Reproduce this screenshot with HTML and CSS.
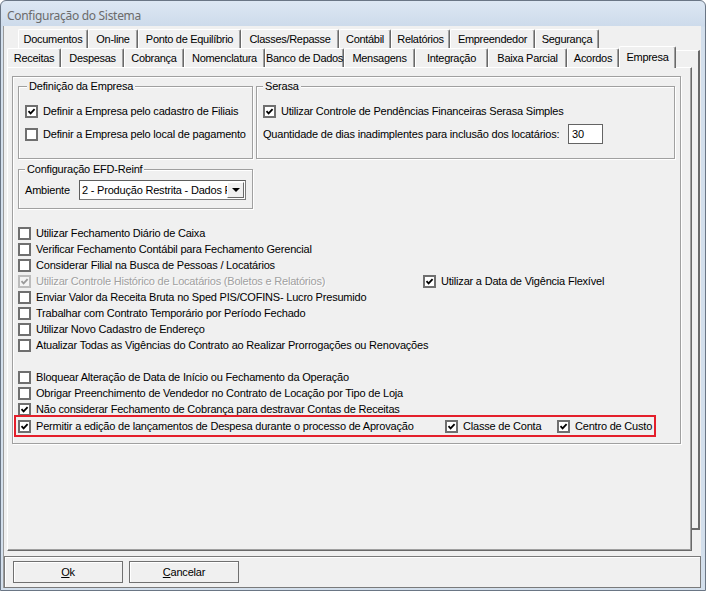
FILE: index.html
```html
<!DOCTYPE html>
<html lang="pt-BR">
<head>
<meta charset="utf-8">
<title>Configuração do Sistema</title>
<link rel="stylesheet" href="styles.css">
</head>
<body>
<div class="window">
  <div class="titlebar">Configuração do Sistema</div>
  <div class="client">
    <div class="tabs">
      <div class="tabrow row1">
        <div class="tab">Documentos</div>
        <div class="tab">On-line</div>
        <div class="tab">Ponto de Equilíbrio</div>
        <div class="tab">Classes/Repasse</div>
        <div class="tab">Contábil</div>
        <div class="tab">Relatórios</div>
        <div class="tab">Empreendedor</div>
        <div class="tab">Segurança</div>
      </div>
      <div class="tabrow row2">
        <div class="tab">Receitas</div>
        <div class="tab">Despesas</div>
        <div class="tab">Cobrança</div>
        <div class="tab">Nomenclatura</div>
        <div class="tab">Banco de Dados</div>
        <div class="tab">Mensagens</div>
        <div class="tab">Integração</div>
        <div class="tab">Baixa Parcial</div>
        <div class="tab">Acordos</div>
        <div class="tab active">Empresa</div>
        <div class="filler"></div>
      </div>
    </div>
    <div class="pagewrap">
      <div class="page">
        <div class="panel">
          <div class="toprow">
            <div class="group g-def">
              <span class="legend legend-def">Definição da Empresa</span>
              <div class="row first"><span class="cb on"><svg viewBox="0 0 9 9"><path d="M1.5 4.2 L3.6 6.4 L7.6 2.2"/></svg></span>Definir a Empresa pelo cadastro de Filiais</div>
              <div class="row second"><span class="cb"></span>Definir a Empresa pelo local de pagamento</div>
            </div>
            <div class="group g-serasa">
              <span class="legend">Serasa</span>
              <div class="row first"><span class="cb on"><svg viewBox="0 0 9 9"><path d="M1.5 4.2 L3.6 6.4 L7.6 2.2"/></svg></span>Utilizar Controle de Pendências Financeiras Serasa Simples</div>
              <div class="row qty"><span class="qty-label">Quantidade de dias inadimplentes para inclusão dos locatários:</span><span class="edit">30</span></div>
            </div>
          </div>
          <div class="group g-efd">
            <span class="legend">Configuração EFD-Reinf</span>
            <div class="row amb"><span class="amb-label">Ambiente</span>
              <span class="select"><span class="select-text">2 - Produção Restrita - Dados F</span><span class="dd"><span class="tri"></span></span></span>
            </div>
          </div>
          <div class="list list1">
            <div class="row"><span class="cb"></span>Utilizar Fechamento Diário de Caixa</div>
            <div class="row"><span class="cb"></span>Verificar Fechamento Contábil para Fechamento Gerencial</div>
            <div class="row"><span class="cb"></span>Considerar Filial na Busca de Pessoas / Locatários</div>
            <div class="row split">
              <span class="item dis"><span class="cb on dis"><svg viewBox="0 0 9 9"><path d="M1.5 4.2 L3.6 6.4 L7.6 2.2"/></svg></span>Utilizar Controle Histórico de Locatários (Boletos e Relatórios)</span>
              <span class="item"><span class="cb on"><svg viewBox="0 0 9 9"><path d="M1.5 4.2 L3.6 6.4 L7.6 2.2"/></svg></span>Utilizar a Data de Vigência Flexível</span>
            </div>
            <div class="row"><span class="cb"></span>Enviar Valor da Receita Bruta no Sped PIS/COFINS- Lucro Presumido</div>
            <div class="row"><span class="cb"></span>Trabalhar com Contrato Temporário por Período Fechado</div>
            <div class="row"><span class="cb"></span>Utilizar Novo Cadastro de Endereço</div>
            <div class="row"><span class="cb"></span>Atualizar Todas as Vigências do Contrato ao Realizar Prorrogações ou Renovações</div>
          </div>
          <div class="list list2">
            <div class="row"><span class="cb"></span>Bloquear Alteração de Data de Início ou Fechamento da Operação</div>
            <div class="row"><span class="cb"></span>Obrigar Preenchimento de Vendedor no Contrato de Locação por Tipo de Loja</div>
            <div class="row"><span class="cb on"><svg viewBox="0 0 9 9"><path d="M1.5 4.2 L3.6 6.4 L7.6 2.2"/></svg></span>Não considerar Fechamento de Cobrança para destravar Contas de Receitas</div>
            <div class="highlight">
              <span class="item"><span class="cb on"><svg viewBox="0 0 9 9"><path d="M1.5 4.2 L3.6 6.4 L7.6 2.2"/></svg></span>Permitir a edição de lançamentos de Despesa durante o processo de Aprovação</span>
              <span class="item"><span class="cb on"><svg viewBox="0 0 9 9"><path d="M1.5 4.2 L3.6 6.4 L7.6 2.2"/></svg></span>Classe de Conta</span>
              <span class="item"><span class="cb on"><svg viewBox="0 0 9 9"><path d="M1.5 4.2 L3.6 6.4 L7.6 2.2"/></svg></span>Centro de Custo</span>
            </div>
          </div>
        </div>
      </div>
      <div class="ghost"></div>
    </div>
    <div class="btnbar">
      <button class="btn"><u>O</u>k</button>
      <button class="btn"><u>C</u>ancelar</button>
    </div>
  </div>
</div>
</body>
</html>
```

FILE: styles.css
```css
* { box-sizing: border-box; }
html, body { margin: 0; padding: 0; }
body {
  width: 706px;
  height: 591px;
  overflow: hidden;
  background: #ffffff;
  font-family: "Liberation Sans", Arial, sans-serif;
  font-size: 11px;
  letter-spacing: -0.2px;
  color: #000;
}

.window {
  width: 706px;
  height: 591px;
  border: 1px solid #6a7685;
  border-radius: 6px 6px 0 0;
  background: linear-gradient(#dde7f3 0, #cddbeb 25px, #d3dfec 26px, #d3dfec 100%);
  padding: 0 4px 2px 2px;
  display: flex;
  flex-direction: column;
}

.titlebar {
  height: 25px;
  flex: none;
  padding: 3px 0 0 4px;
  display: flex;
  align-items: center;
  font-family: "Noto Sans", "Open Sans", sans-serif;
  font-size: 12px;
  letter-spacing: -0.3px;
  color: #6b6b6b;
}

.client {
  flex: 1;
  background: #f0f0f0;
  border-left: 1px solid #9a9a9a;
  display: flex;
  flex-direction: column;
}

/* ---------- tabs ---------- */
.tabs { margin-top: 3px; flex: none; }
.tabrow { display: flex; align-items: flex-start; height: 19px; }
.row1 { padding-left: 14px; }
.row2 { padding-left: 3px; }

.tab {
  height: 19px;
  display: flex;
  align-items: center;
  justify-content: center;
  white-space: nowrap;
  letter-spacing: -0.3px;
  border-top: 1px solid #ffffff;
  border-left: 1px solid #ffffff;
  border-right: 1px solid #696969;
  box-shadow: inset -1px 0 0 #a0a0a0;
  border-radius: 2px 2px 0 0;
  background: #f0f0f0;
}
.row1 .tab:nth-child(1) { width: 70px; }
.row1 .tab:nth-child(2) { width: 50px; }
.row1 .tab:nth-child(3) { width: 103px; }
.row1 .tab:nth-child(4) { width: 98px; }
.row1 .tab:nth-child(5) { width: 52px; }
.row1 .tab:nth-child(6) { width: 59px; }
.row1 .tab:nth-child(7) { width: 85px; }
.row1 .tab:nth-child(8) { width: 64px; }

.row2 .tab:nth-child(1) { width: 54px; }
.row2 .tab:nth-child(2) { width: 63px; }
.row2 .tab:nth-child(3) { width: 60px; }
.row2 .tab:nth-child(4) { width: 81px; }
.row2 .tab:nth-child(5) { width: 79px; }
.row2 .tab:nth-child(6) { width: 71px; }
.row2 .tab:nth-child(7) { width: 73px; }
.row2 .tab:nth-child(8) { width: 79px; }
.row2 .tab:nth-child(9) { width: 52px; }

.tab.active {
  width: 57px;
  height: 22px;
  margin-top: -2px;
  padding-bottom: 1px;
  position: relative;
  z-index: 1;
}

.filler {
  flex: 1;
  height: 17px;
  margin-top: 2px;
  margin-right: 1px;
  border-top: 1px solid #ffffff;
  border-right: 2px solid #696969;
}

/* ---------- page ---------- */
.pagewrap { display: flex; align-items: flex-start; flex: none; margin-left: 3px; }
.page {
  width: 685px;
  height: 484px;
  flex: none;
  border-top: 1px solid #ffffff;
  border-left: 1px solid #ffffff;
  border-right: 1px solid #696969;
  border-bottom: 1px solid #696969;
  box-shadow: inset -1px -1px 0 #a0a0a0;
  padding: 8px 0 0 4px;
}
.ghost {
  width: 8px;
  height: 463px;
  flex: none;
  border-right: 2px solid #696969;
  border-bottom: 2px solid #696969;
}

.panel {
  width: 669px;
  height: 368px;
  border: 1px solid #a0a0a0;
  box-shadow: 1px 1px 0 #ffffff, inset 1px 1px 0 #ffffff;
  padding: 0 0 0 5px;
}

.toprow { display: flex; gap: 3px; }

.group {
  border: 1px solid #a0a0a0;
  box-shadow: 1px 1px 0 #ffffff, inset 1px 1px 0 #ffffff;
  margin-top: 9px;
  padding-left: 6px;
}
.legend {
  display: block;
  width: max-content;
  margin: -7px 0 0 0;
  padding: 0 2px;
  background: #f0f0f0;
  line-height: 13px;
}
.legend-def { margin-left: 2px; }

.g-def { width: 235px; height: 73px; }
.g-serasa { width: 419px; height: 73px; }
.g-efd { width: 235px; height: 40px; margin-top: 10px; }

.row {
  display: flex;
  align-items: center;
  height: 16px;
  white-space: nowrap;
}
.group .row.first { margin-top: 10px; }
.group .row.second { margin-top: 7px; }
.group .row.qty { margin-top: 5px; height: 20px; }
.qty-label { width: 305px; flex: none; }
.edit {
  width: 35px;
  height: 20px;
  background: #ffffff;
  border: 1px solid #646464;
  padding: 2px 0 0 3px;
  line-height: 14px;
}

.group .row.amb { margin-top: 4px; height: 20px; }
.amb-label { width: 54px; flex: none; }
.select {
  width: 167px;
  height: 20px;
  display: flex;
  background: #ffffff;
  border: 1px solid #7a7a7a;
  border-top-color: #5e5e5e;
  border-left-color: #5e5e5e;
  padding: 1px;
}
.select-text {
  flex: 1;
  overflow: hidden;
  white-space: nowrap;
  padding-left: 1px;
  line-height: 16px;
}
.dd {
  width: 17px;
  flex: none;
  background: #f0f0f0;
  border: 1px solid #ffffff;
  border-right-color: #696969;
  border-bottom-color: #696969;
  display: flex;
  align-items: center;
  justify-content: center;
}
.tri {
  width: 0;
  height: 0;
  border-left: 4px solid transparent;
  border-right: 4px solid transparent;
  border-top: 4px solid #000;
}

/* ---------- checkbox ---------- */
.cb {
  width: 13px;
  height: 13px;
  flex: none;
  margin-right: 5px;
  border: 2px solid #6f6f6f;
  background: #ffffff;
  display: flex;
  align-items: center;
  justify-content: center;
}
.cb svg { width: 9px; height: 9px; display: block; }
.cb path { fill: none; stroke: #000; stroke-width: 1.8; }
.cb.dis { border-color: #bcbcbc; background: #f4f4f4; }
.cb.dis path { stroke: #9a9a9a; }
.item { display: flex; align-items: center; white-space: nowrap; }
.item.dis { color: #a0a0a0; text-shadow: 1px 1px 0 #ffffff; }

/* ---------- lists ---------- */
.list1 { margin-top: 16px; }
.list2 { margin-top: 16px; }
.split { display: grid; grid-template-columns: 405px auto; }

.highlight {
  position: relative;
  display: grid;
  grid-template-columns: 427px 112px auto;
  align-items: center;
  width: 642px;
  height: 22px;
  margin: -2px 0 0 -4px;
  padding-left: 2px;
  border: 2px solid #e41f2b;
}

/* ---------- buttons ---------- */
.btnbar {
  flex: none;
  margin-top: 5px;
  height: 32px;
  border: 1px solid #7a7a7a;
  box-shadow: inset 1px 1px 0 #ffffff;
  padding: 4px 0 0 8px;
  display: flex;
  align-items: flex-start;
  gap: 6px;
}
.btn {
  width: 110px;
  height: 22px;
  border: 1px solid #707070;
  box-shadow: inset 1px 1px 0 #ffffff;
  background: #f0f0f0;
  font-family: "Liberation Sans", Arial, sans-serif;
  font-size: 11px;
  letter-spacing: -0.2px;
  color: #000;
  padding: 0;
}
```
